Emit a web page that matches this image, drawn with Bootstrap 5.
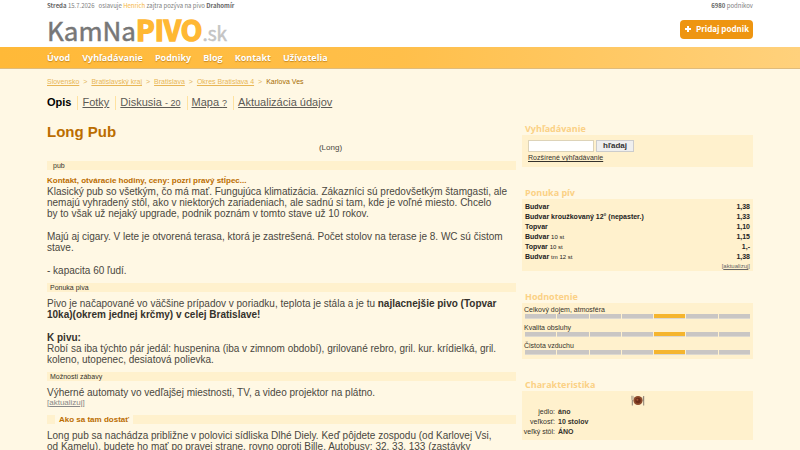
<!DOCTYPE html>
<html lang="sk">
<head>
<meta charset="utf-8">
<meta name="viewport" content="width=device-width, initial-scale=1">
<title>Long Pub – KamNaPIVO.sk</title>
<link href="https://cdn.jsdelivr.net/npm/bootstrap@5.3.0/dist/css/bootstrap.min.css" rel="stylesheet">
<style>
:root{--head:"Noto Sans CJK SC","Open Sans",sans-serif;--menu:"Open Sans",sans-serif;--gold:#ffb833;--band:#fff1cd;--rust:#bb6d00}
body{background:#fff8e4;font-family:"Liberation Sans",Arial,sans-serif;font-size:10px;line-height:11px;color:#4a4740;overflow-x:hidden}
a{color:inherit}
.wrap{max-width:706px;width:100%}
.masthead{background:#fff;font-family:var(--head);padding-bottom:1px}
.topline{font-size:6px;line-height:12px;color:#808080}
.topline b{color:#666}
.topline a{color:#f5b540}
.brand{font-size:26px;line-height:34px;height:34px;color:#777;text-decoration:none;-webkit-text-stroke:.5px currentColor}
.brand strong{font-size:28px;color:var(--gold);-webkit-text-stroke:1.5px var(--gold)}
.brand small{font-size:19px;color:#c4c4c4}
.addpub{background:#ee9511;color:#fff;font-size:8px;font-weight:700;line-height:18px;border:0;border-radius:4px;height:19px}
.addpub:hover{background:#d8850a;color:#fff}
.mainbar{background:linear-gradient(90deg,#ffb938,#ffbf4a 50%,#ffd17c);border-bottom:1px solid #dfbb7c;font-family:var(--menu);height:22px}
.links{gap:12px}
.mainbar a{color:#fff;font-size:9px;font-weight:700;line-height:21px;text-decoration:none;text-shadow:0 1px 1px #c98a20}
.crumbs{font-size:7px;line-height:10px;color:#e2b45c;gap:4px}
.crumbs a{color:#e8b656}
.crumbs span{color:#a66b00}
.tabs{font-size:11px;line-height:13px;color:#5c5a55;margin-top:9px}
.tabs li{padding-right:6px}
.tabs li+li{border-left:1px solid #ffe2a0;padding-left:4px}
.tabs small{font-size:9px}
.tabs .on{color:#000;font-weight:700}
.cols{margin-top:13px;gap:6px}
h1{font-size:15px;line-height:18px;font-weight:700;color:var(--rust)}
.sub{font-size:8px;line-height:10px;margin:2px 0 8px;padding-left:98px}
.strip{background:var(--band);font-size:7px;line-height:9px;font-weight:400;margin:7px 0 6px;padding-left:3px;color:#35322c}
.strip.kind{margin-top:0;padding-left:6px}
.strip.way{padding-left:8px}
.strip.way span{display:inline-block;background:#fff8e4;color:var(--rust);font-size:8px;font-weight:700;padding:0 4px}
.note{font-size:8px;line-height:10px;font-weight:700;color:var(--rust)}
main p{margin:0;padding-right:4px}
main p+p{margin-top:12px}
.upd{font-size:8px;line-height:10px;color:#888}
main b{color:#35322c}
.leftcol{flex:469 1 0;min-width:0}
.rightcol{flex:231 1 0;min-width:0;font-size:7px}
.rightcol section{margin-bottom:20px}
.rightcol h2{font-family:var(--menu);font-size:9px;line-height:12px;font-weight:700;color:#fbd185;padding-left:3px}
.panel{background:var(--band);color:#35322c}
.find{padding:5px 6px 4px}
.find div{gap:2px}
.find input{width:66px;height:12px;border:1px solid #ddd3b8;background:#fff;font-size:8px}
.find button{height:12px;width:38px;background:#efefef;border:1px solid #ccc;font-size:8px;line-height:10px;font-weight:700;color:#333}
.drinks{padding:3px 3px 0}
.drinks table{font-weight:700;color:#222}
.drinks td,.traits td,.traits th{line-height:10px;padding:0}
.drinks small{font-size:6px;font-weight:400}
.drinks .more{font-size:6px;line-height:9px;color:#666}
.rate{padding:2px 3px 4px 2px;line-height:9px}
.meter{gap:1px;margin:0 0 4px 1px}
.meter:last-child{margin-bottom:0}
.meter i{flex:1;height:5px;background:#c9c6c4;border-bottom:1px solid #dcd8d0}
.meter i.hit{background:#f5b52e}
.traits{padding:4px 0 3px}
.traits svg{display:block;margin:0 auto 1px}
.traits th{font-weight:400;text-align:right;width:36px;padding-right:3px}
.traits td{font-weight:700}
</style>
</head>
<body>
<header class="masthead">
  <div class="wrap mx-auto">
    <div class="topline d-flex justify-content-between">
      <div><b>Streda</b> 15.7.2026 &nbsp; oslavuje <a href="#" class="text-decoration-none">Henrich</a> zajtra pozýva na pivo <b>Drahomír</b></div>
      <div><b>6980</b> podnikov</div>
    </div>
    <div class="d-flex justify-content-between align-items-center">
      <a class="brand d-flex align-items-baseline" href="#">KamNa<strong>PIVO</strong><small>.sk</small></a>
      <button type="button" class="addpub btn d-flex align-items-center gap-1 px-1"><svg width="8" height="8" viewBox="0 0 8 8" aria-hidden="true"><path d="M4 1v6M1 4h6" stroke="#fff" stroke-width="2"/></svg>Pridaj podnik</button>
    </div>
  </div>
</header>
<nav class="mainbar" aria-label="Hlavné menu">
  <div class="wrap links mx-auto d-flex">
    <a href="#">Úvod</a><a href="#">Vyhľadávanie</a><a href="#">Podniky</a><a href="#">Blog</a><a href="#">Kontakt</a><a href="#">Užívatelia</a>
  </div>
</nav>
<div class="wrap mx-auto">
  <nav class="crumbs d-flex pt-2" aria-label="Cesta"><a href="#">Slovensko</a>&gt;<a href="#">Bratislavský kraj</a>&gt;<a href="#">Bratislava</a>&gt;<a href="#">Okres Bratislava 4</a>&gt;<span>Karlova Ves</span></nav>
  <ul class="tabs list-unstyled d-flex mb-0">
    <li class="on">Opis</li><li><a href="#">Fotky</a></li><li><a href="#">Diskusia <small>- 20</small></a></li><li><a href="#">Mapa <small>?</small></a></li><li><a href="#">Aktualizácia údajov</a></li>
  </ul>
  <div class="cols d-flex">
    <main class="leftcol">
      <h1 class="mb-0">Long Pub</h1>
      <div class="sub text-center">(Long)</div>
      <h2 class="strip kind">pub</h2>
      <div class="note">Kontakt, otváracie hodiny, ceny: pozri pravý stĺpec...</div>
      <p>Klasický pub so všetkým, čo má mať. Fungujúca klimatizácia. Zákazníci sú predovšetkým štamgasti, ale nemajú vyhradený stôl, ako v niektorých zariadeniach, ale sadnú si tam, kde je voľné miesto. Chcelo by&nbsp;to však už nejaký upgrade, podnik poznám v tomto stave už 10 rokov.</p>
      <p>Majú aj cigary. V lete je otvorená terasa, ktorá je zastrešená. Počet stolov na terase je 8. WC sú čistom stave.</p>
      <p>- kapacita 60 ľudí.</p>
      <h2 class="strip">Ponuka piva</h2>
      <p>Pivo je načapované vo väčšine prípadov v poriadku, teplota je stála a je tu <b>najlacnejšie pivo (Topvar 10ka)(okrem jednej krčmy) v celej Bratislave!</b></p>
      <p><b>K pivu:</b><br>Robí sa iba týchto pár jedál: huspenina (iba v zimnom období), grilované rebro, gril. kur. krídielká, gril. koleno, utopenec, desiatová polievka.</p>
      <h2 class="strip">Možnosti zábavy</h2>
      <p>Výherné automaty vo vedľajšej miestnosti, TV, a video projektor na plátno.</p>
      <div class="upd">[<a href="#">aktualizuj</a>]</div>
      <h2 class="strip way"><span>Ako sa tam dostať</span></h2>
      <p>Long pub sa nachádza približne v polovici sídliska Dlhé Diely. Keď pôjdete zospodu (od Karlovej Vsi, od&nbsp;Kamelu), budete ho mať po pravej strane, rovno oproti Bille. Autobusy: 32, 33, 133 (zastávky</p>
    </main>
    <aside class="rightcol">
      <section>
        <h2 class="mb-0">Vyhľadávanie</h2>
        <form class="panel find">
          <div class="d-flex"><input type="text" aria-label="Hľadaný podnik"><button type="button" class="p-0">hľadaj</button></div>
          <a href="#">Rozšírené výhľadávanie</a>
        </form>
      </section>
      <section>
        <h2 class="mb-0">Ponuka pív</h2>
        <div class="panel drinks">
          <table class="w-100">
            <tr><td>Budvar</td><td class="text-end">1,38</td></tr>
            <tr><td>Budvar kroužkovaný 12° (nepaster.)</td><td class="text-end">1,33</td></tr>
            <tr><td>Topvar</td><td class="text-end">1,10</td></tr>
            <tr><td>Budvar <small>10 st</small></td><td class="text-end">1,15</td></tr>
            <tr><td>Topvar <small>10 st</small></td><td class="text-end">1,-</td></tr>
            <tr><td>Budvar <small>tm 12 st</small></td><td class="text-end">1,38</td></tr>
          </table>
          <div class="more text-end">[<a href="#">aktualizuj</a>]</div>
        </div>
      </section>
      <section>
        <h2 class="mb-0">Hodnotenie</h2>
        <div class="panel rate">
          <div>Celkový dojem, atmosféra</div>
          <div class="meter d-flex"><i></i><i></i><i></i><i></i><i class="hit"></i><i></i><i></i></div>
          <div>Kvalita obsluhy</div>
          <div class="meter d-flex"><i></i><i></i><i></i><i></i><i class="hit"></i><i></i><i></i></div>
          <div>Čistota vzduchu</div>
          <div class="meter d-flex"><i></i><i></i><i></i><i></i><i class="hit"></i><i></i><i></i></div>
        </div>
      </section>
      <section class="mb-0">
        <h2 class="mb-0">Charakteristika</h2>
        <div class="panel traits">
          <svg width="14" height="11" viewBox="0 0 14 11" aria-hidden="true"><circle cx="7" cy="5.5" r="4.6" fill="#8d4a2c"/><circle cx="7" cy="5.5" r="2.7" fill="#6b2c18"/><circle cx="6.400" cy="4.800" r="1" fill="#a85636"/><path d="M1.300 5v5.500M12.700 1v9.500" stroke="#8a8074"/><path d="M.4.8v3q0 1 .9 1t.9-1v-3M1.300.8V4" fill="none" stroke="#8a8074" stroke-width=".5"/><path d="M12.700.8q-1.200 1.500-.9 5h.9z" fill="#8a8074"/></svg>
          <table class="w-100">
            <tr><th scope="row">jedlo:</th><td>áno</td></tr>
            <tr><th scope="row">veľkosť:</th><td>10 stolov</td></tr>
            <tr><th scope="row" class="text-nowrap">veľký stôl:</th><td>ÁNO</td></tr>
          </table>
        </div>
      </section>
    </aside>
  </div>
</div>
<script src="https://cdn.jsdelivr.net/npm/bootstrap@5.3.0/dist/js/bootstrap.bundle.min.js"></script>
</body>
</html>
